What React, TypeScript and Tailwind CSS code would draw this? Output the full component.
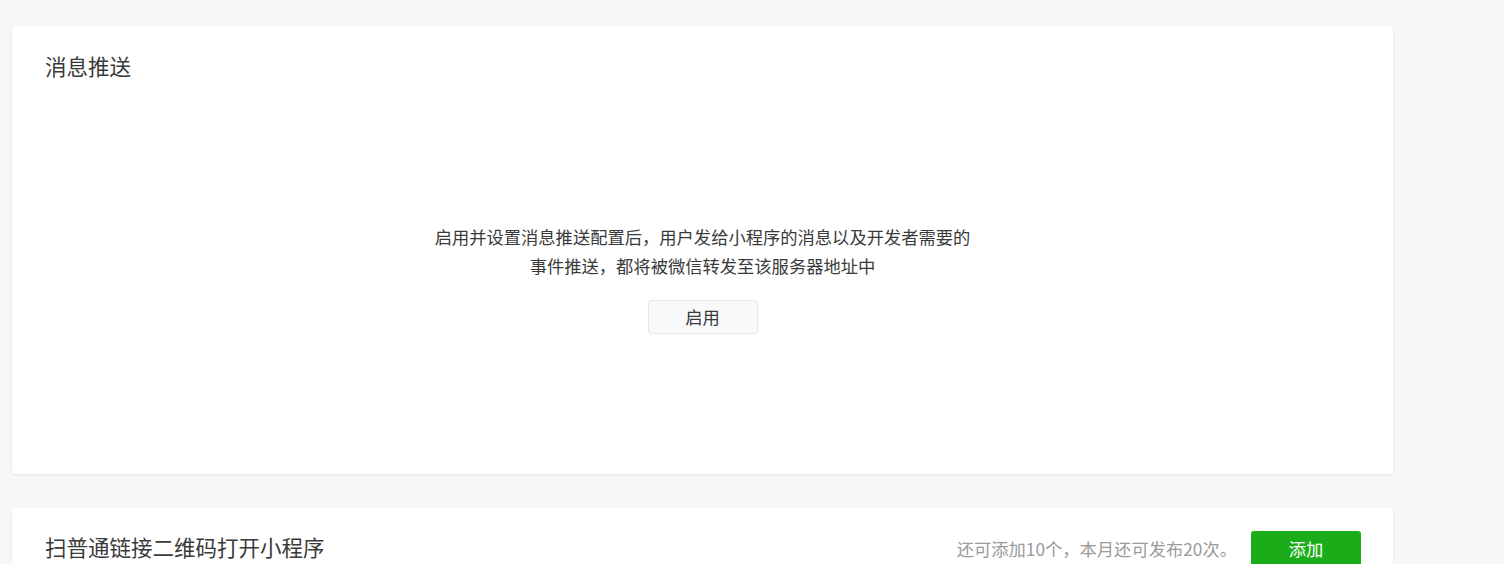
const font = { fontFamily: '"Noto Sans CJK SC", "Noto Sans", sans-serif' };

export default function App() {
  return (
    <div className="bg-white min-h-screen" style={font}>
      <div className="h-[564px] overflow-hidden bg-[#f6f7f9] pl-[12px] pt-[26px]">
        <div className="w-[1381px] h-[448px] bg-white rounded-[4px] shadow-[0_1px_3px_rgba(0,0,0,0.08)] flex flex-col">
          <div className="pl-[33px] pt-[25px] text-[21.5px] leading-[29px] text-[#3a3a3a]">消息推送</div>
          <div className="flex-1 flex flex-col items-center justify-center pt-[1px]">
            <p className="text-center text-[17.3px] leading-[29px] text-[#3a3a3a]">
              启用并设置消息推送配置后，用户发给小程序的消息以及开发者需要的
              <br />
              事件推送，都将被微信转发至该服务器地址中
            </p>
            <button className="mt-[20px] w-[110px] h-[34px] rounded-[3px] border border-[#e4e8eb] bg-[#f7f9fa] text-[17.3px] text-[#3a3a3a]">
              启用
            </button>
          </div>
        </div>

        <div className="mt-[34px] w-[1381px] h-[120px] bg-white rounded-[4px] shadow-[0_1px_3px_rgba(0,0,0,0.08)] flex items-start justify-between pl-[33px] pr-[32px] pt-[23px]">
          <div className="pt-[1px] text-[21.5px] leading-[29px] text-[#3a3a3a]">扫普通链接二维码打开小程序</div>
          <div className="flex items-center gap-[14px]">
            <span className="text-[17.3px] text-[#9a9a9a]">还可添加10个，本月还可发布20次。</span>
            <button className="w-[110px] h-[36px] rounded-[3px] bg-[#1aad19] text-[17.3px] text-white">添加</button>
          </div>
        </div>
      </div>
    </div>
  );
}
